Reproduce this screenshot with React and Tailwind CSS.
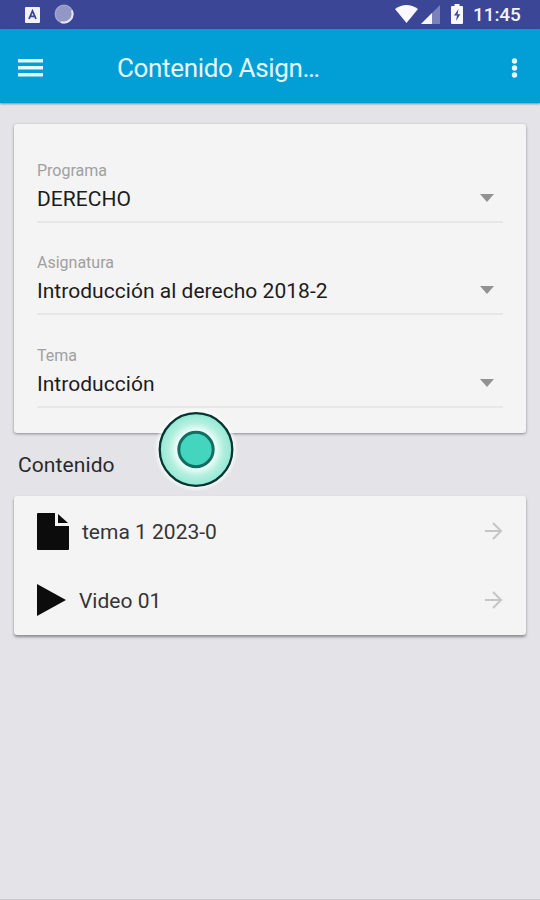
const FIELDS = [
    { label: 'Programa', value: 'DERECHO' },
    { label: 'Asignatura', value: 'Introducción al derecho 2018-2' },
    { label: 'Tema', value: 'Introducción' },
];

function StatusBar() {
    return (
        <div className="flex h-[29px] items-center bg-[#3b4696] text-[#f4f5fc]">
            <svg className="ml-[25px]" width="15" height="16" viewBox="0 0 15 16">
                <rect width="15" height="16" rx="1" fill="#f1f2fa" />
                <path d="M4 12 7.5 4 11 12M5.3 9.3h4.4" fill="none" stroke="#3b4696" strokeWidth="1.8" />
            </svg>
            <svg className="ml-[14px] -mt-[2px]" width="20" height="20" viewBox="0 0 20 20">
                <circle cx="10" cy="10" r="8.8" fill="#9297c6" stroke="#a5aad2" strokeWidth="1.2" />
                <path d="M17.8 6.5A8.6 8.6 0 0 1 7 18" fill="none" stroke="#e2e5f6" strokeWidth="2" />
            </svg>
            <svg className="ml-auto -mt-[2px]" width="23" height="20" viewBox="0 0 23 20">
                <path d="M0 5Q11.500-3 23 5L11.500 19Z" fill="#f8f8fd" />
            </svg>
            <svg className="ml-[3px] -mt-[1px]" width="19" height="19" viewBox="0 0 19 19">
                <path d="M0 19 19 0V19Z" fill="#7b82b9" />
                <path d="M0 19 11 8V19Z" fill="#f8f8fd" />
            </svg>
            <svg className="ml-[11px] -mt-[2px]" width="12" height="20" viewBox="0 0 12 20">
                <path d="M3.500 0h5v2H11q1 0 1 1v16q0 1-1 1H1q-1 0-1-1V3q0-1 1-1h2.500Z" fill="#f8f8fd" />
                <path d="M7.500 5 3 11.500h3L5 17l4.300-6.700H6.500Z" fill="#3b4696" />
            </svg>
            <span className="mr-[19px] ml-[10px] w-[48px] text-[19px] leading-[28px] font-medium tracking-[-0.1px] whitespace-nowrap">11:45</span>
        </div>
    );
}

function AppBar() {
    return (
        <header className="flex h-[74px] items-center bg-[#019fd5] pt-[3px] text-[#e6f7ff] shadow-[0_1px_2px_rgba(0,0,0,0.4)]">
            <svg className="ml-[18px]" width="25" height="18" viewBox="0 0 25 18" fill="#e6f7ff">
                <rect width="25" height="3.500" />
                <rect y="7" width="25" height="3.500" />
                <rect y="14" width="25" height="3.500" />
            </svg>
            <h1 className="mt-px ml-[74px] text-[26px] leading-[32px] tracking-[-0.35px] whitespace-nowrap">Contenido Asign…</h1>
            <svg className="mr-[22px] ml-auto" width="7" height="20" viewBox="0 0 7 20" fill="#e6f7ff">
                <circle cx="3.500" cy="3" r="2.700" />
                <circle cx="3.500" cy="10" r="2.700" />
                <circle cx="3.500" cy="17" r="2.700" />
            </svg>
        </header>
    );
}

function SelectField({ label, value }) {
    return (
        <div className="flex h-[92.500px] flex-col justify-end border-b-2 border-[#e7e7e7]">
            <div className="text-[16px] leading-[20px] text-[#a0a0a0]">{label}</div>
            <div className="mt-[3px] mb-[7px] flex h-[30px] items-center justify-between">
                <span className="text-[21px] leading-[30px] tracking-[0.03px] text-[#1c1c1c]">{value}</span>
                <svg className="mr-[9px] mb-[2px]" width="14" height="8" viewBox="0 0 14 8">
                    <path d="M0 0h14L7 8Z" fill="#929292" />
                </svg>
            </div>
        </div>
    );
}

function Arrow() {
    return (
        <svg className="mr-px ml-auto" width="18" height="18" viewBox="0 0 18 18" fill="none" stroke="#c5c5c5" strokeWidth="2">
            <path d="M0 9h16M8 1l8 8-8 8" />
        </svg>
    );
}

// Translucent ring with a solid centre, floating over both cards
function TouchMarker() {
    return (
        <svg className="absolute top-[408px] left-[154px]" width="84" height="84" viewBox="0 0 84 84">
            <defs>
                <radialGradient id="ring">
                    <stop offset="0.500" stopColor="#f4fffc" />
                    <stop offset="0.740" stopColor="#b5efe0" />
                    <stop offset="1" stopColor="#91e8d4" />
                </radialGradient>
                <radialGradient id="halo">
                    <stop offset="0.860" stopColor="#fff" stopOpacity="0.900" />
                    <stop offset="1" stopColor="#fff" stopOpacity="0" />
                </radialGradient>
            </defs>
            <circle cx="42" cy="41.500" r="42" fill="url(#halo)" />
            <circle cx="42" cy="41.500" r="36.300" fill="url(#ring)" stroke="#07352f" strokeWidth="2.300" />
            <circle cx="42" cy="41.500" r="17.200" fill="#43d5bd" stroke="#126e62" strokeWidth="3" />
        </svg>
    );
}

export default function App() {
    return (
        <div className="relative flex h-[900px] w-[540px] flex-col overflow-hidden border-b border-[#c8c8cb] bg-[#e4e3e8] font-['Roboto','Noto_Sans',sans-serif]">
            <StatusBar />
            <AppBar />
            <section className="mx-[14px] mt-[21px] h-[309px] rounded-[3px] bg-[#f4f4f4] px-[23px] pt-[6px] shadow-[0_1px_3px_rgba(0,0,0,0.4)]">
                {FIELDS.map((field) => (
                    <SelectField key={field.label} {...field} />
                ))}
            </section>
            <h2 className="mt-[17px] ml-[18px] text-[21px] leading-[30px] tracking-[0.1px] text-[#29292b]">Contenido</h2>
            <section className="mx-[14px] mt-[16px] h-[139px] rounded-[3px] bg-[#f4f4f4] pr-[22px] pl-[23px] shadow-[0_2px_3px_rgba(0,0,0,0.4)]">
                <div className="flex h-[70px] items-center">
                    <svg width="32" height="37" viewBox="0 0 32 37" fill="#0c0c0c">
                        <path d="M1 0H18V13H32V36Q32 37 31 37H1Q0 37 0 36V1Q0 0 1 0Z" />
                        <path d="M21 1 31 10H21Z" />
                    </svg>
                    <span className="ml-[13px] pt-[2px] text-[21px] leading-[30px] text-[#353535]">tema 1 2023-0</span>
                    <Arrow />
                </div>
                <div className="flex h-[68px] items-center">
                    <svg width="29" height="32" viewBox="0 0 29 32">
                        <path d="M0 0 29 16 0 32Z" fill="#0c0c0c" />
                    </svg>
                    <span className="ml-[13px] pt-[2px] text-[21px] leading-[30px] text-[#353535]">Video 01</span>
                    <Arrow />
                </div>
            </section>
            <TouchMarker />
        </div>
    );
}
